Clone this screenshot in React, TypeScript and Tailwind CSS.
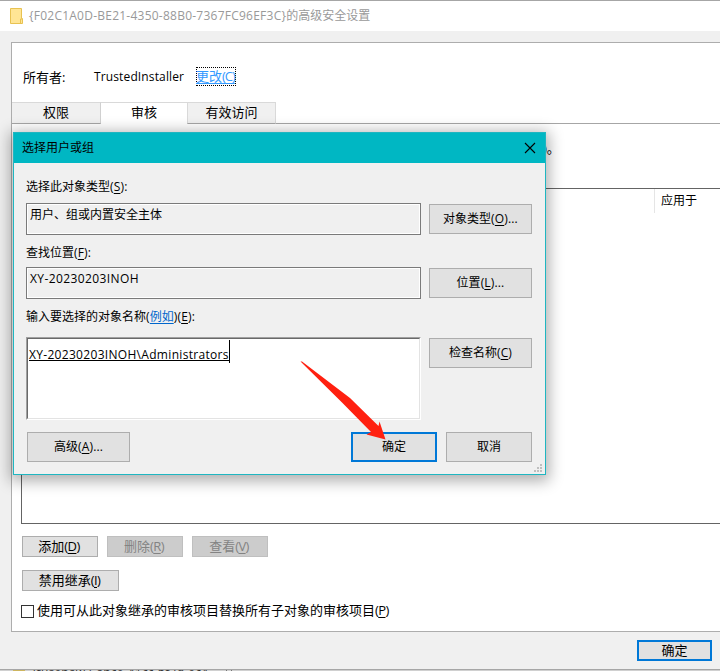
import React from "react";

const FONT = "font-['Open_Sans','Noto_Sans_CJK_SC',sans-serif]";

function Label({ text, hot, tail = "", className = "", hotClass = "tracking-[0.15px]" }: { text: string; hot?: string; tail?: string; className?: string; hotClass?: string }) {
  return (
    <span className={`block whitespace-nowrap ${className}`}>
      {text}
      {hot && (
        <span className={hotClass}>
          (<span className="underline underline-offset-2">{hot}</span>){tail}
        </span>
      )}
    </span>
  );
}

function Button({ className = "", children }: { className?: string; children: React.ReactNode }) {
  return (
    <button className={`flex shrink-0 items-center justify-center border ${className}`}>
      {children}
    </button>
  );
}

const PLAIN = "border-[#adadad] bg-[#e1e1e1] text-black";
const DISABLED = "border-[#bfbfbf] bg-[#cccccc] text-[#838383]";
const PRIMARY = "border-2 border-[#0078d7] bg-[#e1e1e1] text-black";
const TIGHT = "tracking-[-0.6px]";

function Grip() {
  const dots = [[6, 0], [3, 3], [6, 3], [0, 6], [3, 6], [6, 6]];
  return (
    <svg className="absolute right-[3px] bottom-[2px]" width="8" height="8" shapeRendering="crispEdges">
      {dots.map(([x, y]) => (
        <rect key={`${x}-${y}`} x={x} y={y} width="2" height="2" fill="#bfbfbf" />
      ))}
    </svg>
  );
}

function PickerDialog() {
  return (
    <div className="absolute top-[132px] left-[13px] flex h-[343px] w-[533px] flex-col border border-[#1fb6c1] bg-[#f0f0f0] text-[12px] leading-[18px] shadow-[0_3px_14px_3px_rgba(0,0,0,0.32)]">
      <div className="flex h-[30px] shrink-0 items-center justify-between bg-[#00b7c3] pr-[9px] pb-px pl-[8px]">
        <Label text="选择用户或组" className="pt-px" />
        <svg width="12" height="12" viewBox="0 0 12 12" stroke="#000" strokeWidth="1.1">
          <path d="M1 1 11 11M11 1 1 11" />
        </svg>
      </div>
      <div className="flex flex-col pr-[13px] pl-[12px]">
        <Label text="选择此对象类型" hot="S" tail=":" className="mt-[15px] h-[18px]" />
        <div className="mt-[7px] flex h-[32px] items-center justify-between">
          <div className="h-[32px] w-[395px] border border-[#7a7a7a] p-px">
            <div className="h-full pl-[2px] leading-[20px] outline outline-white">用户、组或内置安全主体</div>
          </div>
          <Button className={`h-[30px] w-[103px] ${PLAIN}`}><Label text="对象类型" hot="O" tail="..." /></Button>
        </div>
        <Label text="查找位置" hot="F" tail=":" className="mt-[9px] h-[18px]" />
        <div className="mt-[5px] flex h-[32px] items-center justify-between">
          <div className="h-[32px] w-[395px] border border-[#7a7a7a] p-px">
            <div className="h-full pl-[2px] leading-[20px] tracking-[0.4px] outline outline-white">XY-20230203INOH</div>
          </div>
          <Button className={`h-[30px] w-[103px] ${PLAIN}`}><Label text="位置" hot="L" tail="..." /></Button>
        </div>
        <div className="mt-[9px] h-[18px] whitespace-nowrap">
          输入要选择的对象名称<span className="tracking-[0.15px]">(</span>
          <span className="text-[#0066cc] underline underline-offset-2">例如</span>
          <span className="tracking-[0.15px]">)(<span className="underline underline-offset-2">E</span>):</span>
        </div>
        <div className="mt-[11px] flex h-[83px] items-start justify-between">
          <div className="h-[83px] w-[395px] border border-t-[#a0a0a0] border-r-white border-b-white border-l-[#a0a0a0]">
            <div className="flex h-full items-start border border-t-[#696969] border-r-[#e3e3e3] border-b-[#e3e3e3] border-l-[#696969] bg-white pt-px pl-px">
              <span className="mt-[5px] h-[16px] border-b border-black pt-px leading-[18px] tracking-[0.31px] whitespace-nowrap">XY-20230203INOH\Administrators</span>
              <span className="h-[23px] w-px bg-black" />
            </div>
          </div>
          <Button className={`mt-px h-[30px] w-[103px] ${PLAIN}`}><Label text="检查名称" hot="C" /></Button>
        </div>
        <div className="mt-[12px] flex h-[30px] pl-px">
          <Button className={`h-[30px] w-[103px] ${PLAIN}`}><Label text="高级" hot="A" tail="..." /></Button>
          <Button className={`ml-auto h-[30px] w-[86px] ${PRIMARY}`}>确定</Button>
          <Button className={`ml-[9px] h-[30px] w-[86px] ${PLAIN}`}>取消</Button>
        </div>
      </div>
      <Grip />
    </div>
  );
}

export default function App() {
  return (
    <div className={`relative flex h-[671px] w-[720px] flex-col overflow-hidden bg-[#f0f0f0] text-[13px] leading-[18px] text-black ${FONT}`}>
      <div className="flex h-[31px] shrink-0 items-center border-t border-[#a6a6a6] bg-white pl-[10px] text-[12px] text-[#999999]">
        <svg width="13" height="16" viewBox="0 0 13 16">
          <path d="M.5.5h11v10h1v5H.5z" fill="#ffe595" stroke="#e8c251" />
          <path d="M10.5 15v-4h1.5" fill="none" stroke="#e8c251" />
        </svg>
        <span className="ml-[6px] whitespace-nowrap">
          <span className="tracking-[0.24px]">{"{F02C1A0D-BE21-4350-88B0-7367FC96EF3C}"}</span>的高级安全设置
        </span>
      </div>

      <div className="mt-[11px] ml-[11px] flex h-[590px] shrink-0 flex-col border border-r-0 border-[#adadad] bg-white">
        <div className="flex h-[59px] shrink-0 items-center pt-[8px] pl-[11px]">
          <span className="w-[71px]">所有者:</span>
          <span className="w-[102px] text-[12px] tracking-[0.13px]">TrustedInstaller</span>
          <span className="flex h-[19px] w-[40px] items-center border border-dotted border-black whitespace-nowrap text-[#3399ff]">
            <span className="-ml-px pb-px underline underline-offset-2">更改<span className="tracking-[-1px]">(C)</span></span>
          </span>
        </div>
        <div className="flex h-[22px] shrink-0">
          <div className="flex w-[89px] items-center justify-center border-t border-r border-b border-t-[#d9d9d9] border-r-[#d0d0d0] border-b-[#a6a6a6] bg-[#f0f0f0] pb-[2px]">权限</div>
          <div className="flex w-[86px] items-center justify-center border-t border-[#d9d9d9] bg-white pb-[3px]">审核</div>
          <div className="flex w-[89px] items-center justify-center border border-[#d9d9d9] border-b-[#a6a6a6] bg-[#f0f0f0] pb-[2px]">有效访问</div>
          <div className="flex-1 border-b border-[#a6a6a6]" />
        </div>
        <div className="flex h-[64px] shrink-0 pt-[15px] pl-[531px]">)。</div>
        <div className="ml-[9px] flex h-[336px] shrink-0 border border-r-0 border-[#646464]">
          <div className="ml-auto flex h-[24px] w-[66px] items-center border-l border-[#e5e5e5] pl-[6px] text-[12px]">应用于</div>
        </div>
        <div className="mt-[12px] ml-[10px] flex h-[21px] shrink-0 gap-[9px]">
          <Button className={`w-[76px] pr-[2px] pb-[2px] ${PLAIN}`}><Label text="添加" hot="D" hotClass={TIGHT} /></Button>
          <Button className={`w-[76px] pr-[2px] pb-[2px] ${DISABLED}`}><Label text="删除" hot="R" hotClass={TIGHT} /></Button>
          <Button className={`w-[76px] pr-[2px] pb-[2px] ${DISABLED}`}><Label text="查看" hot="V" hotClass={TIGHT} /></Button>
        </div>
        <div className="mt-[13px] ml-[10px] flex h-[21px] shrink-0">
          <Button className={`w-[97px] pr-[2px] pb-[2px] ${PLAIN}`}><Label text="禁用继承" hot="I" hotClass={TIGHT} /></Button>
        </div>
        <div className="mt-[11px] ml-[9px] flex h-[18px] shrink-0 items-center">
          <span className="mt-px size-[13px] border border-[#333333] bg-white" />
          <Label text="使用可从此对象继承的审核项目替换所有子对象的审核项目" hot="P" hotClass={TIGHT} className="ml-[3px] pb-[2px]" />
        </div>
      </div>

      <div className="mt-[8px] flex h-[21px] shrink-0 justify-end pr-[8px]">
        <Button className={`w-[75px] pb-[2px] ${PRIMARY}`}>确定</Button>
      </div>

      <div className="mt-[8px] flex h-[2px] shrink-0 items-start overflow-hidden border-t border-[#a6a6a6] bg-[#d0d0d0] pl-[13px]">
        <span className="h-[2px] w-[12px] bg-[#cdb55f]" />
        <span className="ml-[7px] h-[6px] text-[12px] leading-[6px] tracking-[0.2px] whitespace-nowrap text-[#333333]">{"{fusenaw7-ance-41cc-bf7d-ec4"}</span>
        <span className="ml-[18px] h-[2px] w-[6px] border-x border-[#777777]" />
      </div>

      <PickerDialog />

      <svg className="pointer-events-none absolute top-[360px] left-[298px]" width="92" height="84" viewBox="298 360 92 84">
        <path d="M300.5 361.5 302 361.5 350 398 378.5 426 379.5 421.5 385.5 439.5 366.5 434.5 371 432 342 402.500z" fill="#ff2010" />
      </svg>
    </div>
  );
}
